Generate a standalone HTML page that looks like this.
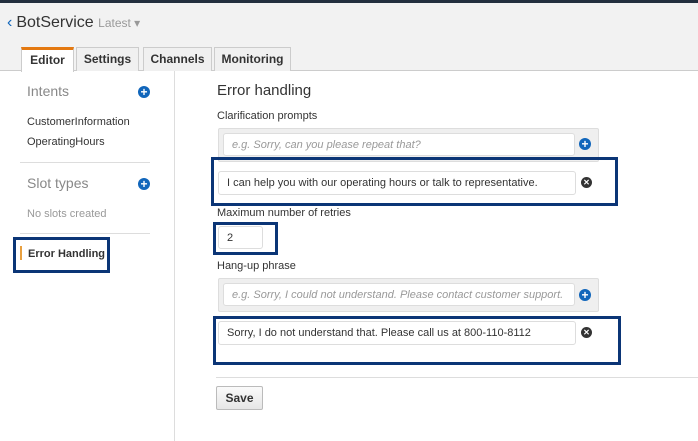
<!DOCTYPE html>
<html><head><style>
*{box-sizing:border-box;margin:0;padding:0}
body{width:698px;height:441px;overflow:hidden;background:#fff;font-family:"Liberation Sans",sans-serif;color:#333;position:relative}
.a{position:absolute;white-space:nowrap}
.tab{position:absolute;top:47px;height:24px;background:#f0f0f0;border:1px solid #ccc;border-bottom:none;font-weight:bold;font-size:12px;text-align:center;line-height:22px;color:#333}
.inp{position:absolute;background:#fff;border:1px solid #ddd;border-radius:3px;font-size:11px;line-height:23px;padding-left:8px;white-space:nowrap;overflow:hidden}
.ph{color:#999;font-style:italic}
.grp{position:absolute;background:#efefef;border:1px solid #ddd;border-radius:2px}
.nav{position:absolute;border:3px solid #0b3576}
.plus{position:absolute;width:12px;height:12px;border-radius:50%;background:#1166bb;color:#fff;font-size:12px;font-weight:bold;line-height:12px;text-align:center}
.x{position:absolute;width:11px;height:11px;border-radius:50%;background:#333;color:#fff;font-size:8px;font-weight:bold;line-height:11px;text-align:center}
.lbl{position:absolute;font-size:11px;color:#333;white-space:nowrap}
</style></head><body>
<div class="a" style="left:0;top:0;width:698px;height:71px;background:#f2f2f2;border-bottom:1px solid #ccc"></div>
<div class="a" style="left:0;top:0;width:698px;height:3px;background:#232f3e"></div>
<div class="a" style="left:7px;top:14px;font-size:16px;color:#333"><span style="color:#1166bb;margin-right:4px">&#x2039;</span>BotService <span style="font-size:12px;color:#999">Latest &#9662;</span></div>
<div class="tab" style="left:21px;width:53px;background:#fff;border-top:3px solid #e47911;height:25px;line-height:20px">Editor</div>
<div class="tab" style="left:76px;width:63px">Settings</div>
<div class="tab" style="left:143px;width:69px">Channels</div>
<div class="tab" style="left:214px;width:77px">Monitoring</div>
<div class="a" style="left:174px;top:71px;width:1px;height:370px;background:#ddd"></div>
<div class="a" style="left:27px;top:83px;font-size:14px;color:#888">Intents</div>
<div class="plus" style="left:138px;top:86px">+</div>
<div class="a" style="left:27px;top:116px;font-size:11px">CustomerInformation</div>
<div class="a" style="left:27px;top:136px;font-size:11px">OperatingHours</div>
<div class="a" style="left:20px;top:162px;width:130px;height:1px;background:#ddd"></div>
<div class="a" style="left:27px;top:175px;font-size:14px;color:#888">Slot types</div>
<div class="plus" style="left:138px;top:178px">+</div>
<div class="a" style="left:27px;top:208px;font-size:11px;color:#999">No slots created</div>
<div class="a" style="left:20px;top:233px;width:130px;height:1px;background:#ddd"></div>
<div class="nav" style="left:13px;top:237px;width:97px;height:36px"></div>
<div class="a" style="left:20px;top:246px;width:2px;height:14px;background:#e8a040"></div>
<div class="a" style="left:28px;top:248px;font-size:11px;font-weight:bold">Error Handling</div>
<div class="a" style="left:217px;top:82px;font-size:15px">Error handling</div>
<div class="lbl" style="left:217px;top:110px">Clarification prompts</div>
<div class="grp" style="left:218px;top:128px;width:381px;height:34px"></div>
<div class="inp ph" style="left:223px;top:133px;width:352px;height:23px">e.g. Sorry, can you please repeat that?</div>
<div class="plus" style="left:579px;top:138px">+</div>
<div class="nav" style="left:211px;top:157px;width:407px;height:49px"></div>
<div class="inp" style="left:218px;top:171px;width:358px;height:24px">I can help you with our operating hours or talk to representative.</div>
<div class="x" style="left:581px;top:177px">✕</div>
<div class="lbl" style="left:217px;top:207px">Maximum number of retries</div>
<div class="nav" style="left:213px;top:222px;width:65px;height:33px"></div>
<div class="inp" style="left:218px;top:226px;width:45px;height:23px">2</div>
<div class="lbl" style="left:217px;top:260px">Hang-up phrase</div>
<div class="grp" style="left:218px;top:278px;width:381px;height:34px"></div>
<div class="inp ph" style="left:223px;top:283px;width:352px;height:23px">e.g. Sorry, I could not understand. Please contact customer support.</div>
<div class="plus" style="left:579px;top:289px">+</div>
<div class="nav" style="left:213px;top:316px;width:408px;height:49px"></div>
<div class="inp" style="left:218px;top:321px;width:358px;height:24px">Sorry, I do not understand that. Please call us at 800-110-8112</div>
<div class="x" style="left:581px;top:327px">✕</div>
<div class="a" style="left:216px;top:377px;width:482px;height:1px;background:#ddd"></div>
<div class="a" style="left:216px;top:386px;width:47px;height:24px;border:1px solid #bbb;border-radius:2px;background:linear-gradient(#fafafa,#e6e6e6);font-size:12px;font-weight:bold;text-align:center;line-height:22px">Save</div>
</body></html>
